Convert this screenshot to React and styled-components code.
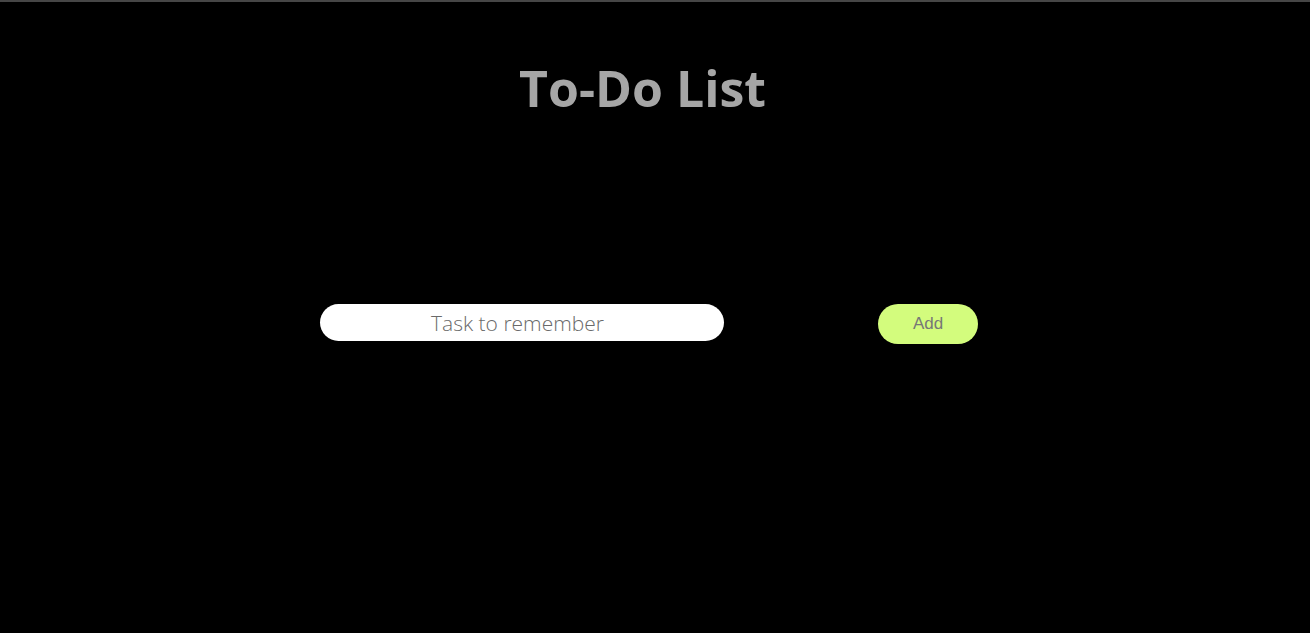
import React from "react";
import styled, { createGlobalStyle } from "styled-components";

const Global = createGlobalStyle`
  html, body { margin: 0; padding: 0; background: #000; }
  body { font-family: "Open Sans", sans-serif; }
`;

const Page = styled.div`
  min-height: 633px;
  box-sizing: border-box;
  background: #000;
  border-top: 2px solid #464646;
  display: flex;
  flex-direction: column;
  align-items: center;
`;

const Title = styled.h1`
  margin: 52px 0 0 -25px;
  font-family: "Open Sans", sans-serif;
  font-weight: 700;
  font-size: 50px;
  line-height: 68px;
  color: #a6a6a6;
`;

const Form = styled.form`
  margin-top: 182px;
  margin-left: -12px;
  display: flex;
  align-items: flex-start;
  gap: 154px;
`;

const Input = styled.input`
  width: 404px;
  height: 37px;
  box-sizing: border-box;
  border: none;
  border-radius: 19px;
  background: #fff;
  text-align: center;
  font-family: "Open Sans", sans-serif;
  font-weight: 300;
  font-size: 21px;
  color: #333;
  outline: none;
  padding: 0 19px 0 10px;
  &::placeholder { color: #6a6a6a; }
`;

const Button = styled.button`
  width: 100px;
  height: 40px;
  border: none;
  border-radius: 20px;
  background: #d3fc7d;
  color: #777;
  font-family: "Liberation Sans", Arial, sans-serif;
  font-size: 17px;
  padding: 0;
  cursor: pointer;
`;

export default function App() {
  return (
    <>
      <Global />
      <Page>
        <Title>To-Do List</Title>
        <Form onSubmit={(e) => e.preventDefault()}>
          <Input placeholder="Task to remember" />
          <Button type="submit">Add</Button>
        </Form>
      </Page>
    </>
  );
}
